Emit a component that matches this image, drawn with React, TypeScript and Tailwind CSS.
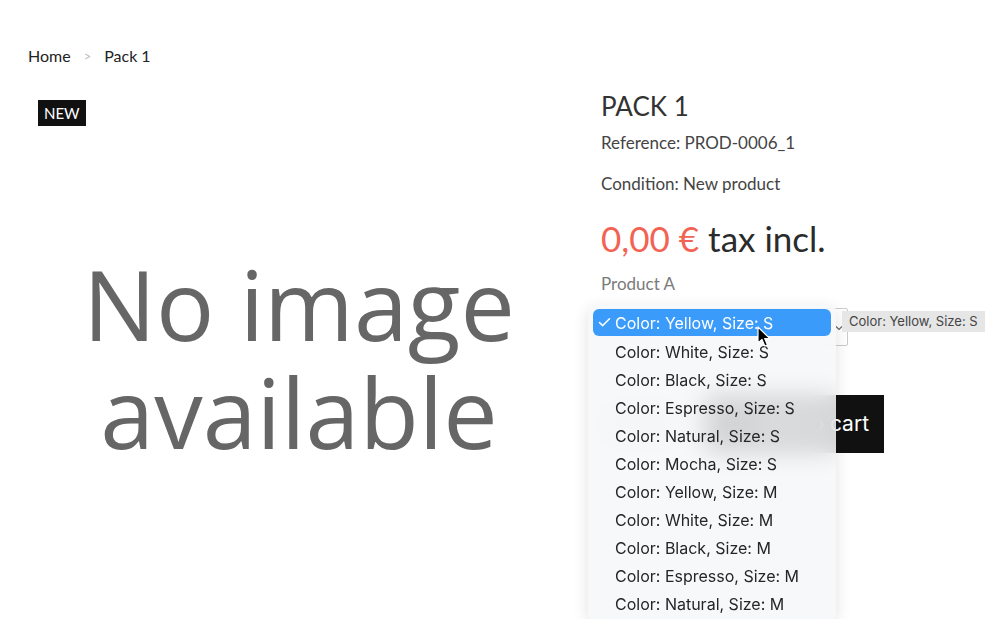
import { Check } from 'lucide-react';

const options = [
  'Color: Yellow, Size: S',
  'Color: White, Size: S',
  'Color: Black, Size: S',
  'Color: Espresso, Size: S',
  'Color: Natural, Size: S',
  'Color: Mocha, Size: S',
  'Color: Yellow, Size: M',
  'Color: White, Size: M',
  'Color: Black, Size: M',
  'Color: Espresso, Size: M',
  'Color: Natural, Size: M',
];

function Cursor() {
  return (
    <svg width="14" height="22" viewBox="0 0 14 22" className="absolute left-[164px] top-[17px]">
      <path
        d="M1 1 L1 17 L5 13.5 L7.8 20 L10.4 18.8 L7.7 12.6 L12.8 12.6 Z"
        fill="#000"
        stroke="#fff"
        strokeWidth="1.2"
        strokeLinejoin="round"
      />
    </svg>
  );
}

function SelectMenu() {
  return (
    <div className="absolute -left-[13px] -top-[3px] z-10 h-[314px] w-[248px] overflow-hidden rounded-[6px] bg-[#f6f7f8]/85 px-[5px] pt-[4px] font-['Inter',sans-serif] shadow-[0_4px_16px_rgba(0,0,0,0.12)] backdrop-blur-md">
      {options.map((opt, i) => (
        <div
          key={opt}
          className={
            i === 0
              ? 'relative mb-[1.5px] flex h-[27px] items-center rounded-[6px] bg-[#3b9bfb] text-white'
              : 'flex h-[28.1px] items-center text-[#262626]'
          }
        >
          <span className="flex w-[22px] justify-end pr-[3px]">
            {i === 0 && <Check size={15} strokeWidth={2.4} />}
          </span>
          <span className="text-[16px]">{opt}</span>
          {i === 0 && <Cursor />}
        </div>
      ))}
    </div>
  );
}

export default function App() {
  return (
    <div className="h-[619px] w-[1000px] overflow-hidden bg-white font-['Lato',sans-serif] text-[#333]">
      <div className="px-[28px] pt-[45px]">
        <nav className="flex items-center gap-[13px] text-[16px] leading-[22px] text-[#232323]">
          <span>Home</span>
          <span className="text-[13px] text-[#bbb]">&gt;</span>
          <span>Pack 1</span>
        </nav>

        <div className="mt-[25px] flex gap-[31px]">
          {/* product image */}
          <div className="relative flex h-[520px] w-[542px] shrink-0 flex-col items-center pt-[157px] font-['Open_Sans',sans-serif] text-[97px] leading-[108px] text-[#666]">
            <span className="absolute left-[10px] top-[8px] bg-[#111] px-[6px] py-[2px] font-['Lato',sans-serif] text-[15px] leading-[22px] text-white">
              NEW
            </span>
            <div className="blur-[0.6px]">No image</div>
            <div className="blur-[0.6px]">available</div>
          </div>

          {/* product info */}
          <div className="flex-1">
            <h1 className="text-[26px] leading-[28px] text-[#333]">PACK 1</h1>
            <p className="mt-[13px] text-[17px] leading-[20px] text-[#444]">Reference: PROD-0006_1</p>
            <p className="mt-[21px] text-[17px] leading-[20px] text-[#444]">Condition: New product</p>
            <div className="mt-[24px] flex items-baseline gap-[9px] text-[35px] leading-[40px]">
              <span className="text-[#f36354]">0,00 €</span>
              <span className="text-[#2b2b2b]">tax incl.</span>
            </div>
            <p className="mt-[16px] text-[17px] leading-[20px] text-[#7a7a7a]">Product A</p>

            <div className="relative mt-[14px] h-[38px] w-[247px]">
              <div className="flex h-full w-full items-center justify-end rounded-[2px] border border-[#ccc] bg-white pr-[4px]">
                <svg width="8" height="6" viewBox="0 0 8 6" className="mt-[2px]">
                  <path d="M1 1.5 L4 4.5 L7 1.5" fill="none" stroke="#666" strokeWidth="1.2" />
                </svg>
              </div>
              <SelectMenu />
              <div className="absolute left-[241px] top-[3px] z-20 whitespace-nowrap bg-[#e6e6e6] px-[7px] py-[2px] font-['Inter',sans-serif] text-[13px] leading-[17px] text-[#444]">
                Color: Yellow, Size: S
              </div>
            </div>

            <div className="mt-[49px] flex items-center gap-[20px]">
              <div className="h-[44px] w-[84px] border border-[#ddd] bg-[#f1f1f1]" />
              <button className="flex h-[58px] w-[179px] items-center justify-end bg-[#111] pr-[15px] font-['Inter',sans-serif] text-[21px] text-white">
                Add to cart
              </button>
            </div>
          </div>
        </div>
      </div>
    </div>
  );
}
